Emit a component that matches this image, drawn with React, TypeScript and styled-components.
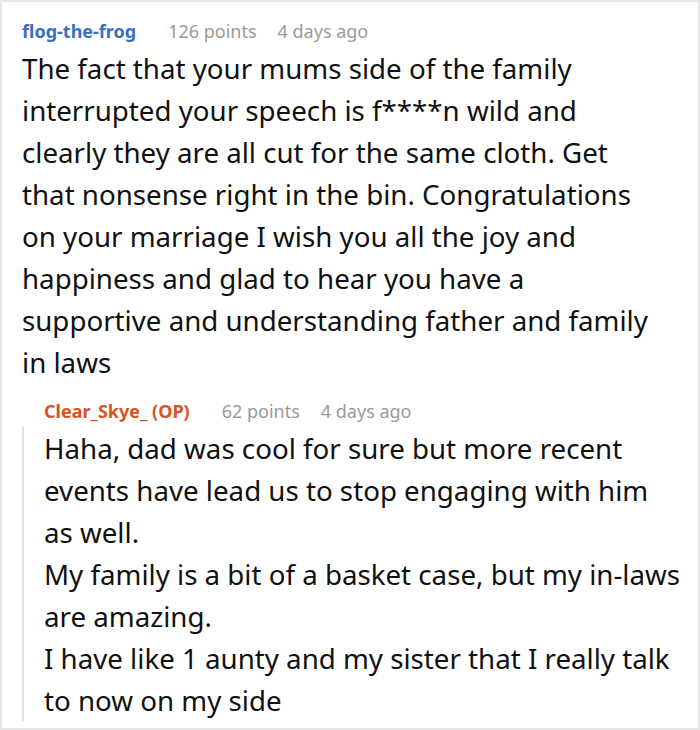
import React from 'react';
import styled, { createGlobalStyle } from 'styled-components';

const GlobalStyle = createGlobalStyle`
  html, body {
    margin: 0;
    padding: 0;
    background: #ffffff;
  }
  body {
    font-family: 'Noto Sans', 'Open Sans', sans-serif;
  }
`;

const Card = styled.div`
  box-sizing: border-box;
  width: 700px;
  height: 730px;
  border: 2px solid #e6e6e6;
  padding: 17px 20px 6px 20px;
  overflow: hidden;
`;

const Meta = styled.div<{ $indent?: boolean }>`
  display: flex;
  align-items: center;
  height: 24px;
  font-size: 18px;
  line-height: 24px;
  white-space: nowrap;
  padding-left: ${p => (p.$indent ? '22px' : '0')};
  margin-bottom: 4px;
`;

const Author = styled.span<{ $op?: boolean }>`
  font-weight: 700;
  color: ${p => (p.$op ? '#d9531e' : '#3c6fbd')};
  margin-right: 32px;
`;

const Info = styled.span`
  color: #9a9a9a;
  margin-right: 21px;
`;

const Body = styled.div`
  font-size: 27.7px;
  line-height: 42px;
  color: #111111;
`;

// the reference keeps its own line breaks, so each line is its own row
const Line = styled.span`
  display: block;
  white-space: nowrap;
`;

const Reply = styled.div`
  margin-top: 16px;
`;

const ReplyBody = styled(Body)`
  border-left: 2px solid #e3e3e3;
  padding-left: 20px;
`;

type CommentMeta = { author: string; points: number; when: string; op?: boolean };

const Header = ({ author, points, when, op }: CommentMeta) => (
  <Meta $indent={op}>
    <Author $op={op}>{author}</Author>
    <Info>{points} points</Info>
    <Info>{when}</Info>
  </Meta>
);

const comment = [
  'The fact that your mums side of the family',
  'interrupted your speech is f****n wild and',
  'clearly they are all cut for the same cloth. Get',
  'that nonsense right in the bin. Congratulations',
  'on your marriage I wish you all the joy and',
  'happiness and glad to hear you have a',
  'supportive and understanding father and family',
  'in laws',
];

const reply = [
  'Haha, dad was cool for sure but more recent',
  'events have lead us to stop engaging with him',
  'as well.',
  'My family is a bit of a basket case, but my in-laws',
  'are amazing.',
  'I have like 1 aunty and my sister that I really talk',
  'to now on my side',
];

export default function App() {
  return (
    <>
      <GlobalStyle />
      <Card>
        <Header author="flog-the-frog" points={126} when="4 days ago" />
        <Body>
          {comment.map(l => (
            <Line key={l}>{l}</Line>
          ))}
        </Body>
        <Reply>
          <Header author="Clear_Skye_ (OP)" points={62} when="4 days ago" op />
          <ReplyBody>
            {reply.map(l => (
              <Line key={l}>{l}</Line>
            ))}
          </ReplyBody>
        </Reply>
      </Card>
    </>
  );
}
